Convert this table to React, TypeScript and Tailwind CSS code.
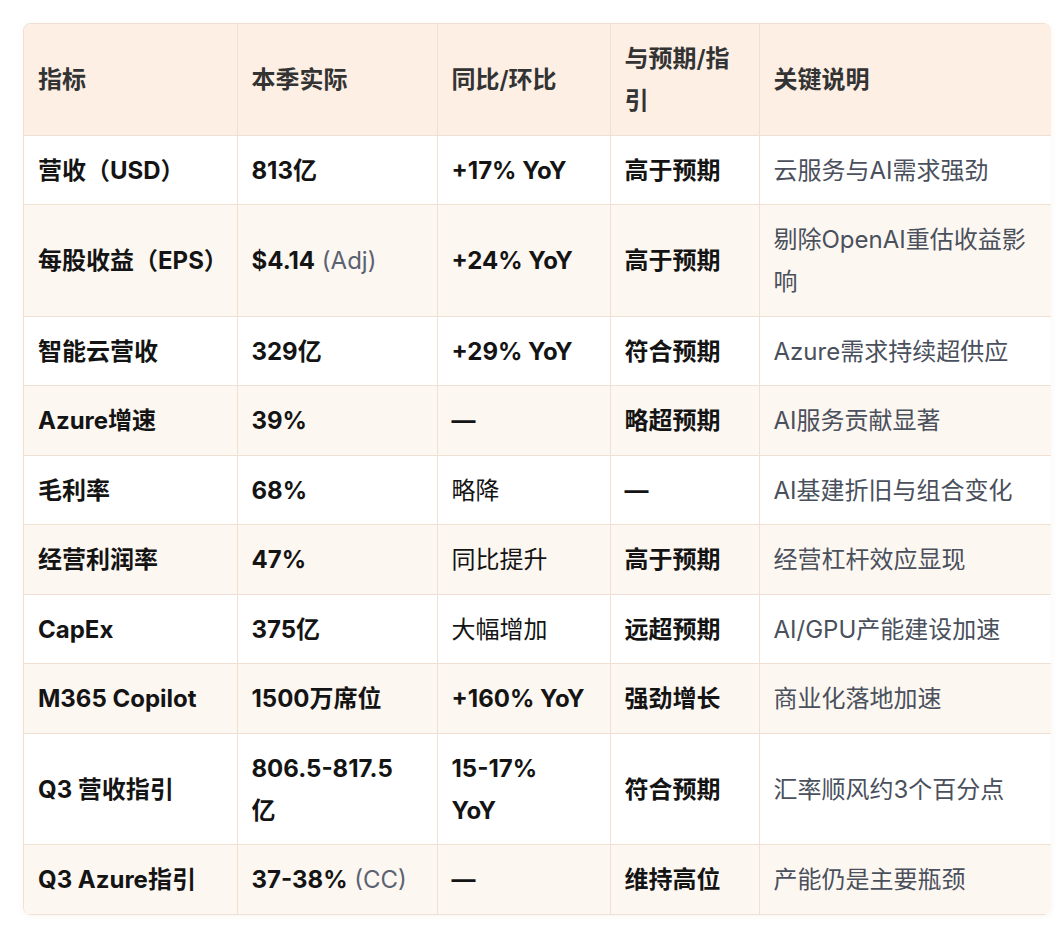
import { Fragment, type ReactNode } from "react";

const rows: {
  metric: string;
  actual: ReactNode;
  note?: string;
  yoy: ReactNode;
  yoyBold: boolean;
  vs: string;
  desc: string;
}[] = [
  { metric: "营收（USD）", actual: "813亿", yoy: "+17% YoY", yoyBold: true, vs: "高于预期", desc: "云服务与AI需求强劲" },
  { metric: "每股收益（EPS）", actual: "$4.14", note: "(Adj)", yoy: "+24% YoY", yoyBold: true, vs: "高于预期", desc: "剔除OpenAI重估收益影响" },
  { metric: "智能云营收", actual: "329亿", yoy: "+29% YoY", yoyBold: true, vs: "符合预期", desc: "Azure需求持续超供应" },
  { metric: "Azure增速", actual: "39%", yoy: "—", yoyBold: true, vs: "略超预期", desc: "AI服务贡献显著" },
  { metric: "毛利率", actual: "68%", yoy: "略降", yoyBold: false, vs: "—", desc: "AI基建折旧与组合变化" },
  { metric: "经营利润率", actual: "47%", yoy: "同比提升", yoyBold: false, vs: "高于预期", desc: "经营杠杆效应显现" },
  { metric: "CapEx", actual: "375亿", yoy: "大幅增加", yoyBold: false, vs: "远超预期", desc: "AI/GPU产能建设加速" },
  { metric: "M365 Copilot", actual: "1500万席位", yoy: "+160% YoY", yoyBold: true, vs: "强劲增长", desc: "商业化落地加速" },
  {
    metric: "Q3 营收指引",
    actual: (
      <Fragment>
        806.5-817.5
        <br />亿
      </Fragment>
    ),
    yoy: (
      <Fragment>
        15-17%
        <br />
        YoY
      </Fragment>
    ),
    yoyBold: true,
    vs: "符合预期",
    desc: "汇率顺风约3个百分点",
  },
  { metric: "Q3 Azure指引", actual: "37-38%", note: "(CC)", yoy: "—", yoyBold: true, vs: "维持高位", desc: "产能仍是主要瓶颈" },
];

const cell = "border-r border-b border-[#f0e0d3] px-[14px] pt-[14px] pb-[12.5px] align-middle";

export default function App() {
  return (
    <div
      className="min-h-[946px] w-[1062px] bg-white pt-[23px] pl-[23px]"
      style={{ fontFamily: '"Inter", "Noto Sans CJK SC", sans-serif' }}
    >
      <div className="w-[1028px] overflow-hidden rounded-lg border-l border-t border-[#f0e0d3] shadow-[0_1px_6px_rgba(120,80,40,0.06)]">
        <table className="w-full table-fixed border-collapse text-[24px] leading-[42px] text-[#141414]">
          <colgroup>
            <col className="w-[213px]" />
            <col className="w-[200px]" />
            <col className="w-[173px]" />
            <col className="w-[149px]" />
            <col className="w-[293px]" />
          </colgroup>
          <thead>
            <tr className="bg-[#fdefe4] text-left">
              <th className={`${cell} font-semibold text-[#333333]`}>指标</th>
              <th className={`${cell} font-semibold text-[#333333]`}>本季实际</th>
              <th className={`${cell} font-semibold text-[#333333]`}>同比/环比</th>
              <th className={`${cell} font-semibold text-[#333333]`}>与预期/指引</th>
              <th className={`${cell} font-semibold text-[#333333]`}>关键说明</th>
            </tr>
          </thead>
          <tbody>
            {rows.map((r, i) => (
              <tr key={r.metric} className={i % 2 === 1 ? "bg-[#fdf7f2]" : "bg-white"}>
                <td className={`${cell} font-bold`}>{r.metric}</td>
                <td className={`${cell} font-bold`}>
                  {r.actual}
                  {r.note && <span className="font-normal text-[#5b6270]"> {r.note}</span>}
                </td>
                <td className={`${cell} ${r.yoyBold ? "font-bold" : "font-normal"}`}>{r.yoy}</td>
                <td className={`${cell} font-bold`}>{r.vs}</td>
                <td className={`${cell} font-normal text-[#4a505c]`}>{r.desc}</td>
              </tr>
            ))}
          </tbody>
        </table>
      </div>
    </div>
  );
}
